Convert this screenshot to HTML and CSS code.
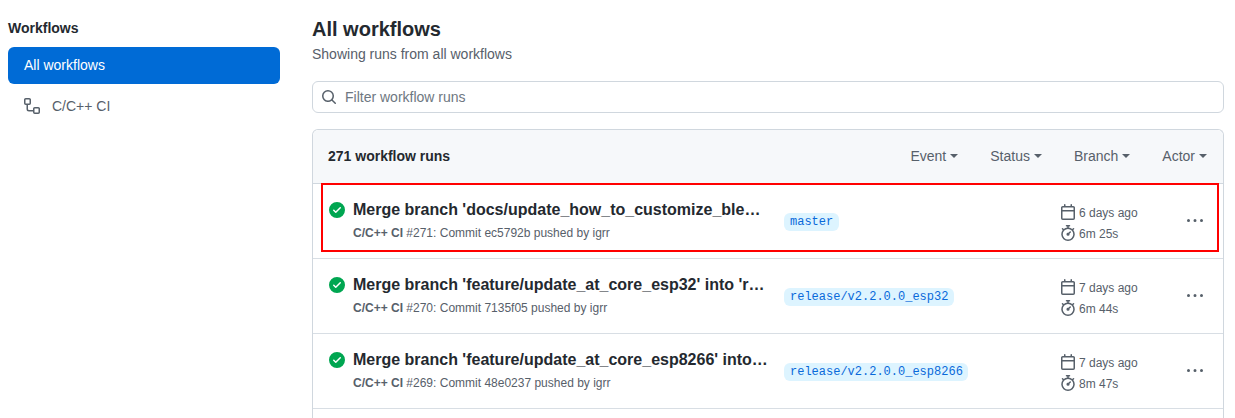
FILE: index.html
```html
<!DOCTYPE html>
<html lang="en">
<head>
<meta charset="utf-8">
<title>Workflows</title>
<link rel="stylesheet" href="styles.css">
</head>
<body>
<svg class="sprite" width="0" height="0" aria-hidden="true">
  <symbol id="i-check" viewBox="0 0 16 16"><path d="M8 16A8 8 0 1 1 8 0a8 8 0 0 1 0 16Zm3.78-9.72a.751.751 0 0 0-.018-1.042.751.751 0 0 0-1.042-.018L6.75 9.19 5.28 7.72a.751.751 0 0 0-1.042.018.751.751 0 0 0-.018 1.042l2 2a.75.75 0 0 0 1.06 0Z"/></symbol>
  <symbol id="i-search" viewBox="0 0 16 16"><path d="M10.68 11.74a6 6 0 0 1-7.922-8.982 6 6 0 0 1 8.982 7.922l3.04 3.04a.749.749 0 0 1-.326 1.275.749.749 0 0 1-.734-.215ZM11.5 7a4.499 4.499 0 1 0-8.997 0A4.499 4.499 0 0 0 11.5 7Z"/></symbol>
  <symbol id="i-workflow" viewBox="0 0 16 16"><path d="M0 1.75C0 .784.784 0 1.75 0h3.5C6.216 0 7 .784 7 1.75v3.5A1.75 1.75 0 0 1 5.25 7H4v4a1 1 0 0 0 1 1h4v-1.25C9 9.784 9.784 9 10.75 9h3.5c.966 0 1.75.784 1.75 1.75v3.5A1.75 1.75 0 0 1 14.25 16h-3.5A1.75 1.75 0 0 1 9 14.25v-.75H5A2.5 2.5 0 0 1 2.5 11V7h-.75A1.75 1.75 0 0 1 0 5.25Zm1.75-.25a.25.25 0 0 0-.25.25v3.5c0 .138.112.25.25.25h3.5a.25.25 0 0 0 .25-.25v-3.5a.25.25 0 0 0-.25-.25Zm9 9a.25.25 0 0 0-.25.25v3.5c0 .138.112.25.25.25h3.5a.25.25 0 0 0 .25-.25v-3.5a.25.25 0 0 0-.25-.25Z"/></symbol>
  <symbol id="i-calendar" viewBox="0 0 16 16"><path d="M4.75 0a.75.75 0 0 1 .75.75V2h5V.75a.75.75 0 0 1 1.5 0V2h1.25c.966 0 1.75.784 1.75 1.75v10.5A1.75 1.75 0 0 1 13.25 16H2.75A1.75 1.75 0 0 1 1 14.25V3.75C1 2.784 1.784 2 2.75 2H4V.75A.75.75 0 0 1 4.75 0ZM2.5 7.5v6.75c0 .138.112.25.25.25h10.5a.25.25 0 0 0 .25-.25V7.5Zm10.75-4H2.75a.25.25 0 0 0-.25.25V6h11V3.75a.25.25 0 0 0-.25-.25Z"/></symbol>
  <symbol id="i-stopwatch" viewBox="0 0 16 16"><path d="M5.75.75A.75.75 0 0 1 6.5 0h3a.75.75 0 0 1 0 1.5h-.75v1l-.001.041a6.724 6.724 0 0 1 3.464 1.435l.007-.006.75-.75a.75.75 0 1 1 1.06 1.06l-.75.75-.006.007a6.75 6.75 0 1 1-10.548 0L2.72 5.03l-.75-.75a.751.751 0 0 1 .018-1.042.751.751 0 0 1 1.042-.018l.75.75.007.006A6.72 6.72 0 0 1 7.25 2.541V1.5H6.5a.75.75 0 0 1-.75-.75ZM8 14.5a5.25 5.25 0 1 0-.001-10.501A5.25 5.25 0 0 0 8 14.5Zm.389-6.7 1.33-1.33a.75.75 0 1 1 1.061 1.06L9.45 8.861A1.503 1.503 0 0 1 8 10.75a1.499 1.499 0 1 1 .389-2.95Z"/></symbol>
  <symbol id="i-kebab" viewBox="0 0 16 16"><path d="M8 9a1.5 1.5 0 1 0 0-3 1.5 1.5 0 0 0 0 3ZM1.5 9a1.5 1.5 0 1 0 0-3 1.5 1.5 0 0 0 0 3Zm13 0a1.5 1.5 0 1 0 0-3 1.5 1.5 0 0 0 0 3Z"/></symbol>
</svg>
<div class="page">
  <aside class="sidebar">
    <h2 class="side-title">Workflows</h2>
    <a class="side-item side-item-active">All workflows</a>
    <a class="side-item"><svg class="icon side-icon"><use href="#i-workflow"/></svg>C/C++ CI</a>
  </aside>
  <main class="main">
    <h1 class="main-title">All workflows</h1>
    <p class="main-sub">Showing runs from all workflows</p>
    <div class="filter">
      <svg class="icon filter-icon"><use href="#i-search"/></svg>
      <span class="filter-text">Filter workflow runs</span>
    </div>
    <section class="runs">
      <header class="runs-head">
        <strong class="runs-count">271 workflow runs</strong>
        <nav class="runs-filters">
          <span class="drop">Event<i class="caret"></i></span>
          <span class="drop">Status<i class="caret"></i></span>
          <span class="drop">Branch<i class="caret"></i></span>
          <span class="drop">Actor<i class="caret"></i></span>
        </nav>
      </header>
      <article class="run">
        <svg class="icon run-status"><use href="#i-check"/></svg>
        <div class="run-info">
          <div class="run-title">Merge branch 'docs/update_how_to_customize_ble…</div>
          <div class="run-meta"><b>C/C++ CI</b> #271: Commit ec5792b pushed by igrr</div>
        </div>
        <div class="run-branch"><span class="branch">master</span></div>
        <div class="run-times">
          <div class="time"><svg class="icon"><use href="#i-calendar"/></svg>6 days ago</div>
          <div class="time"><svg class="icon"><use href="#i-stopwatch"/></svg>6m 25s</div>
        </div>
        <svg class="icon kebab"><use href="#i-kebab"/></svg>
        <div class="highlight"></div>
      </article>
      <article class="run">
        <svg class="icon run-status"><use href="#i-check"/></svg>
        <div class="run-info">
          <div class="run-title">Merge branch 'feature/update_at_core_esp32' into 'r…</div>
          <div class="run-meta"><b>C/C++ CI</b> #270: Commit 7135f05 pushed by igrr</div>
        </div>
        <div class="run-branch"><span class="branch">release/v2.2.0.0_esp32</span></div>
        <div class="run-times">
          <div class="time"><svg class="icon"><use href="#i-calendar"/></svg>7 days ago</div>
          <div class="time"><svg class="icon"><use href="#i-stopwatch"/></svg>6m 44s</div>
        </div>
        <svg class="icon kebab"><use href="#i-kebab"/></svg>
      </article>
      <article class="run">
        <svg class="icon run-status"><use href="#i-check"/></svg>
        <div class="run-info">
          <div class="run-title">Merge branch 'feature/update_at_core_esp8266' into…</div>
          <div class="run-meta"><b>C/C++ CI</b> #269: Commit 48e0237 pushed by igrr</div>
        </div>
        <div class="run-branch"><span class="branch">release/v2.2.0.0_esp8266</span></div>
        <div class="run-times">
          <div class="time"><svg class="icon"><use href="#i-calendar"/></svg>7 days ago</div>
          <div class="time"><svg class="icon"><use href="#i-stopwatch"/></svg>8m 47s</div>
        </div>
        <svg class="icon kebab"><use href="#i-kebab"/></svg>
      </article>
      <div class="runs-rest"></div>
    </section>
  </main>
</div>
</body>
</html>
```

FILE: styles.css
```css
* { box-sizing: border-box; }
html, body { margin: 0; height: 418px; overflow: hidden; background: #fff; }
body { font-family: "Liberation Sans", Arial, sans-serif; font-size: 14px; color: #24292f; }
.sprite { position: absolute; }
.icon { width: 16px; height: 16px; fill: currentColor; flex: none; display: block; }

.page { display: flex; padding: 0 11px 0 8px; gap: 32px; }
.sidebar { width: 272px; flex: none; padding-top: 20px; }
.side-title { margin: 0 0 10px; font-size: 14px; line-height: 17px; font-weight: 700; color: #24292f; }
.side-item { display: flex; align-items: center; height: 37px; padding: 0 0 2px 16px; border-radius: 6px; color: #57606a; line-height: 20px; }
.side-item + .side-item { margin-top: 4px; }
.side-item-active { background: #006bd6; color: #fff; }
.side-icon { margin-right: 12px; color: #57606a; }

.main { flex: 1; min-width: 0; padding-top: 16px; }
.main-title { margin: 0; font-size: 20px; line-height: 26px; font-weight: 700; color: #24292f; }
.main-sub { margin: 0; padding-top: 2px; line-height: 21px; color: #57606a; }
.filter { display: flex; align-items: center; height: 32px; margin-top: 16px; padding-left: 8px; border: 1px solid #d0d7de; border-radius: 6px; background: #fff; }
.filter-icon { color: #57606a; margin-right: 8px; }
.filter-text { color: #6e7781; line-height: 20px; }

.runs { margin-top: 16px; border: 1px solid #d0d7de; border-bottom: 0; border-radius: 6px 6px 0 0; }
.runs-head { display: flex; align-items: center; justify-content: space-between; height: 54px; padding: 0 16px 2px 15px; background: #f6f8fa; border-bottom: 1px solid #d0d7de; border-radius: 6px 6px 0 0; }
.runs-count { font-weight: 700; color: #24292f; }
.runs-filters { display: flex; gap: 32px; color: #57606a; }
.drop { display: inline-flex; align-items: center; }
.caret { display: inline-block; width: 0; height: 0; margin-left: 4px; margin-top: 1px; border: 4px solid transparent; border-top-color: currentColor; border-bottom-width: 0; }

.run { position: relative; display: flex; align-items: center; height: 75px; padding: 0 16px; border-bottom: 1px solid #d8dee4; }
.runs-rest { height: 9px; }
.run-status { color: #00a651; margin: -23px 8px 0 0; }
.run-info { width: 415px; flex: none; margin-top: -3px; }
.run-title { font-size: 16px; line-height: 24px; font-weight: 700; color: #24292f; white-space: nowrap; }
.run-meta { margin-top: 2px; font-size: 12px; line-height: 18px; color: #57606a; }
.run-branch { width: 276px; flex: none; margin-left: 16px; margin-top: 1px; }
.branch { display: inline-block; padding: 0 5.5px 0 6px; font-family: "Liberation Mono", monospace; font-size: 12px; line-height: 18px; color: #0969da; background: #ddf4ff; border-radius: 6px; }
.run-times { flex: none; width: 127px; margin-top: 4px; color: #57606a; font-size: 12px; }
.time { display: flex; align-items: center; gap: 3px; height: 21px; }
.time .icon { margin-top: -1px; }
.kebab { color: #57606a; }
.highlight { position: absolute; left: 8px; top: -1px; right: 4px; height: 69px; border: 2px solid #f00; pointer-events: none; }
```
